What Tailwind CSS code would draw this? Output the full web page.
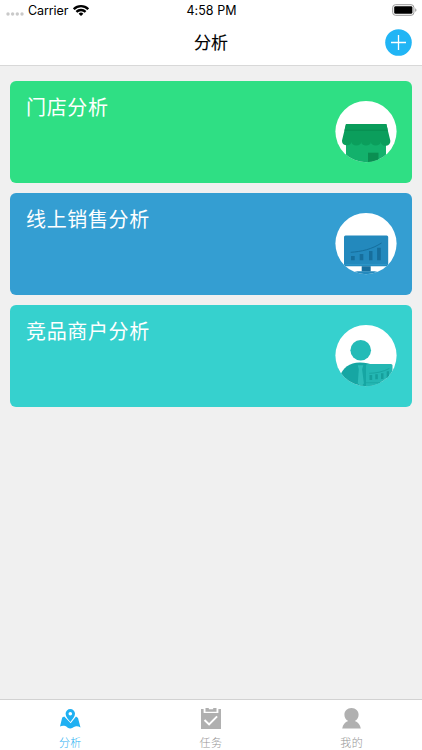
<!DOCTYPE html>
<html lang="zh-CN">
<head>
  <meta charset="UTF-8">
  <meta name="viewport" content="width=device-width, initial-scale=1">
  <title>分析</title>
  <script src="https://cdn.jsdelivr.net/npm/@tailwindcss/browser@4"></script>
</head>
<body class="flex h-screen flex-col overflow-hidden bg-[#f0f0f0] font-['Inter','Noto_Sans_CJK_SC',sans-serif]">

  <header class="h-[66px] shrink-0 border-b border-[#d8d8d8] bg-white text-black">
    <!-- Status bar -->
    <div class="grid h-[21px] grid-cols-3 items-center pr-[5px] pl-[6px] text-[12.5px] leading-5">
      <div class="flex items-center">
        <svg class="mt-[7px] mr-1 h-1 w-[18px]" viewBox="0 0 18 4" fill="#c9c9c9">
          <circle cx="2" cy="2" r="1.7"/><circle cx="6.6" cy="2" r="1.7"/><circle cx="11.3" cy="2" r="1.7"/><circle cx="16" cy="2" r="1.7"/>
        </svg>
        <span class="tracking-[-0.1px]">Carrier</span>
        <svg class="ml-[5px] h-[11px] w-4" viewBox="0 0 16 11" fill="none" stroke="#000" stroke-width="2.3">
          <path d="M.8 4.2a10.2 10.2 0 0 1 14.4 0"/>
          <path d="M3.4 6.9a6.5 6.5 0 0 1 9.2 0"/>
          <path d="M8 11 5.6 8.7a3.4 3.4 0 0 1 4.8 0Z" fill="#000" stroke="none"/>
        </svg>
      </div>
      <span class="text-center tracking-[0.05px]">4:58 PM</span>
      <svg class="mb-px h-3 w-[25px] justify-self-end" viewBox="0 0 25 12">
        <rect x=".7" y=".7" width="21.2" height="10.6" rx="2.8" fill="#fff" stroke="#999"/>
        <rect x="2.2" y="2.2" width="18.2" height="7.6" rx="1.4"/>
        <path d="M23.2 4.2c1.7.5 1.7 3.1 0 3.6Z" fill="#999"/>
      </svg>
    </div>
    <!-- Nav bar -->
    <div class="grid h-11 grid-cols-3 items-center">
      <h1 class="col-start-2 text-center text-[17px] leading-6 font-normal [-webkit-text-stroke:0.12px_#000]">分析</h1>
      <button class="mr-[10px] mb-px justify-self-end">
        <svg class="size-[27px]" viewBox="0 0 27 27">
          <circle cx="13.5" cy="13.5" r="13.3" fill="#21b5f5"/>
          <path d="M13.5 6v15M6 13.5h15" stroke="#fff" stroke-width="1.3"/>
        </svg>
      </button>
    </div>
  </header>

  <main class="flex flex-1 flex-col gap-[10.5px] px-[10px] pt-[15px] text-white">
    <a class="flex h-[101.5px] justify-between rounded-md bg-[#2fdf84] pr-[15px] pl-[16px]">
      <h2 class="pt-[13px] text-[20px] leading-7 tracking-[0.65px]">门店分析</h2>
      <svg class="mt-5 h-[62px] w-[62px]" viewBox="0 0 62 62">
        <clipPath id="clip-shop"><circle cx="31" cy="30.6" r="30.6"/></clipPath>
        <g clip-path="url(#clip-shop)">
          <rect width="62" height="62" fill="#fff"/>
          <rect x="11" y="38" width="40" height="24" fill="#13b16c"/>
          <rect x="33" y="51.7" width="10.5" height="11" fill="#0a8f52"/>
          <path d="M11 23h40.300l4 16.500a4.850 4.500 0 0 1-9.700 1.500 4.850 3.600 0 0 1-9.700 0 4.850 3.600 0 0 1-9.700 0 4.850 3.600 0 0 1-9.700 0 4.850 4.500 0 0 1-9.500-1.500Z" fill="#0b9e5c"/>
          <path d="M11 23h40.300l1.400 5.600H9.600Z" fill="#099c5a"/>
          <path d="M9.500 29.200h43.300" stroke="#088c50" stroke-width="1"/>
        </g>
      </svg>
    </a>

    <a class="flex h-[101.5px] justify-between rounded-md bg-[#349ed2] pr-[15px] pl-[16px]">
      <h2 class="pt-[13px] text-[20px] leading-7 tracking-[0.65px]">线上销售分析</h2>
      <svg class="mt-5 h-[62px] w-[62px]" viewBox="0 0 62 62">
        <clipPath id="clip-online"><circle cx="31" cy="30.6" r="30.6"/></clipPath>
        <g clip-path="url(#clip-online)">
          <rect width="62" height="62" fill="#fff"/>
          <rect x="9" y="22.500" width="44.200" height="30.700" rx="1.500" fill="#2389bd"/>
          <path d="M9 51.700h44.200" stroke="#2f98ca" stroke-width="1"/>
          <rect x="26.700" y="53.200" width="9" height="5.300" fill="#176f9f"/>
          <path d="M17 62c0-2.500 3-3.700 7-3.700h14c4 0 7 1.200 7 3.700Z" fill="#2389bd"/>
          <path d="M16 43h3.700v4.300H16zM24.700 41h3.600v6.300h-3.600zM34 38h3.500v9.300H34zM42.100 34.700h3.700v12.600h-3.700z" fill="#166e9c"/>
          <path d="M15.700 39.300C26 38.700 37 36.200 46.500 30" fill="none" stroke="#166e9c" stroke-width="1"/>
        </g>
      </svg>
    </a>

    <a class="flex h-[101.5px] justify-between rounded-md bg-[#36d1ce] pr-[15px] pl-[16px]">
      <h2 class="pt-[13px] text-[20px] leading-7 tracking-[0.65px]">竞品商户分析</h2>
      <svg class="mt-5 h-[62px] w-[62px]" viewBox="0 0 62 62">
        <clipPath id="clip-rival"><circle cx="31" cy="30.6" r="30.6"/></clipPath>
        <g clip-path="url(#clip-rival)">
          <rect width="62" height="62" fill="#fff"/>
          <circle cx="25.700" cy="25.200" r="10.300" fill="#24bbb7"/>
          <path d="M5 62V51c3-8 9-13.500 20-13.500S41 41 45 50v12Z" fill="#16a6a3"/>
          <path d="M22.800 40.200h5.500l-1.200 4 1.800 14-2.900 4-3.200-4 1-14Z" fill="#2ebdb9"/>
          <rect x="31" y="38.900" width="26.500" height="24" rx="1.500" fill="#24b7b3"/>
          <path d="M34.500 50h2.700v5h-2.700zM40.300 49.200h2.500v5h-2.500zM46 48.200h2.500V54H46zM51.700 46.200h2.300V53h-2.300z" fill="#159f9b"/>
          <path d="M34.300 48.300c7-.2 13.200-1.300 20-4.800" fill="none" stroke="#159f9b" stroke-width=".8"/>
          <path d="M31 57.700h27" stroke="#1aa7a3" stroke-width=".8"/>
        </g>
      </svg>
    </a>
  </main>

  <!-- Tab bar -->
  <nav class="grid h-[51px] shrink-0 grid-cols-3 border-t border-[#d2d2d2] bg-white text-[11px] leading-4 font-light tracking-[0.4px] text-[#959595]">
    <a class="flex flex-col items-center pt-[7px] text-[#1fb0f2]">
      <svg class="h-6 w-6" viewBox="0 0 24 24" fill="currentColor">
        <path d="M6.200 9.500 4.200 10.500 2 19.500c2.600-1 5-.9 7.400.9 3.200 2.200 5 .3 7.800-.8 2-.6 3.400-.1 5.300.8L20 11l-2-1.500-5.300 6.700Z"/>
        <path fill-rule="evenodd" d="M12.300 2A4.700 4.700 0 0 0 7.600 6.700c0 3.100 2.700 5.300 4.700 8.300 2-3 4.700-5.200 4.700-8.300A4.700 4.700 0 0 0 12.300 2Zm0 3a1.800 1.800 0 1 1 0 3.600 1.800 1.800 0 0 1 0-3.600Z"/>
      </svg>
      <span class="mt-1">分析</span>
    </a>
    <a class="flex flex-col items-center pt-[7px]">
      <svg class="h-6 w-6" viewBox="0 0 24 24" fill="#b0b0b0">
        <path d="M2 2h2.600v4h14.800V2H22v20H2Z"/>
        <path d="M6.500 1h3.300v1.200h4.400V1h3.300v3.800h-11Z"/>
        <path d="m5.500 13 4.600 4.400 8-8" fill="none" stroke="#fff" stroke-width="2"/>
      </svg>
      <span class="mt-1">任务</span>
    </a>
    <a class="flex flex-col items-center pt-[7px]">
      <svg class="h-6 w-6" viewBox="0 0 24 24" fill="#b0b0b0">
        <path d="M11.500 1C7.200 1 4.400 4 4.400 7.700c0 2.900 1.500 5 3.800 6.300-3.200 1-5.300 3.600-6 7.600h18.600c-.7-4-2.800-6.600-6-7.600 2.300-1.300 3.800-3.400 3.800-6.300C18.600 4 15.800 1 11.500 1Z"/>
      </svg>
      <span class="mt-1">我的</span>
    </a>
  </nav>

</body>
</html>
